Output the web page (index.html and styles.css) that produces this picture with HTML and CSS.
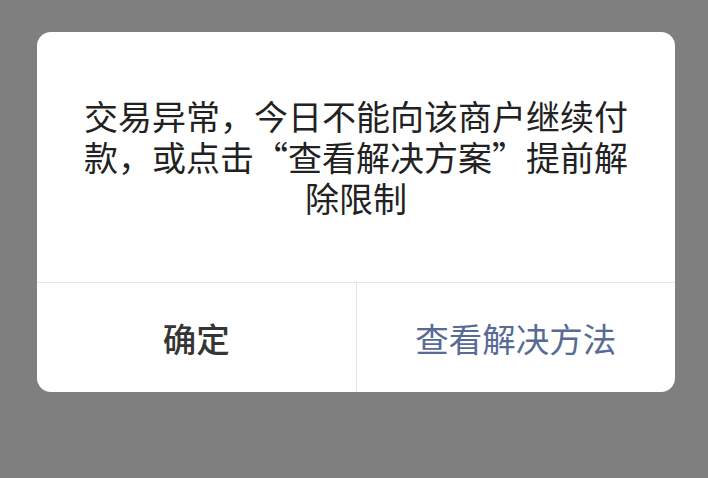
FILE: index.html
```html
<!DOCTYPE html>
<html lang="zh-CN">
<head>
  <meta charset="UTF-8" />
  <meta name="viewport" content="width=device-width, initial-scale=1.0"/>
  <title>提示</title>
  <link rel="stylesheet" href="styles.css">
</head>
<body>
  <div class="mask">
    <div class="dialog">
      <div class="dialog-body">
        交易异常，今日不能向该商户继续付款，或点击“查看解决方案”提前解除限制
      </div>
      <div class="dialog-footer">
        <button class="btn btn-default">确定</button>
        <button class="btn btn-primary">查看解决方法</button>
      </div>
    </div>
  </div>
</body>
</html>
```

FILE: styles.css
```css
html, body { margin: 0; height: 100%; }
body { font-family: "Noto Sans CJK SC", "Noto Sans", sans-serif; background: #7f7f7f; }
.mask { padding: 32px 33px 0 37px; }
.dialog { background: #fff; border-radius: 14px; overflow: hidden; }
.dialog-body {
  padding: 63px 44px 64px; text-align: center;
  font-size: 34px; line-height: 41px; color: #222;
}
.dialog-footer { display: flex; border-top: 1px solid #e5e5e5; height: 109px; }
.btn {
  flex: 1; border: 0; background: none; padding: 0; margin: 0;
  font-family: inherit; font-size: 33.5px; cursor: pointer;
}
.btn + .btn { border-left: 1px solid #e5e5e5; }
.btn-default { color: #353535; font-weight: 500; }
.btn-primary { color: #576b95; }
```
